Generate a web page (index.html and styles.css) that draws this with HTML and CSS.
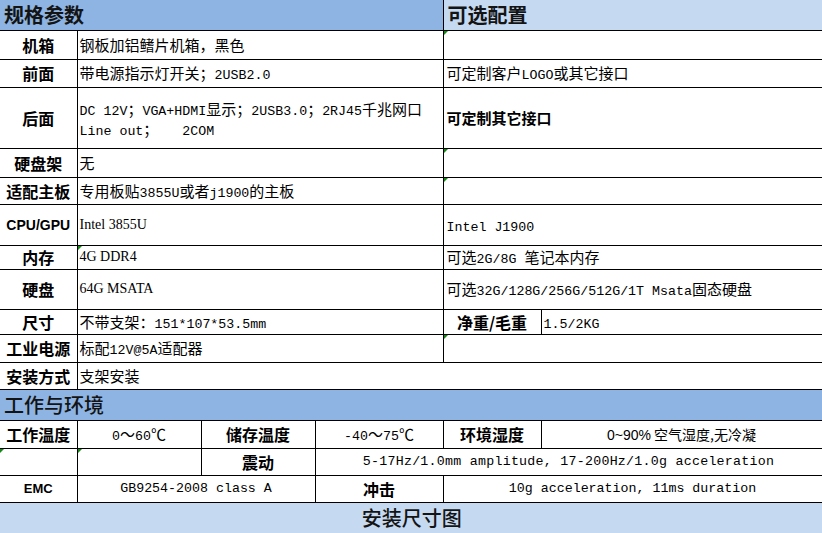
FILE: index.html
```html
<!DOCTYPE html>
<html lang="zh-CN">
<head>
<meta charset="utf-8">
<title>规格参数</title>
<link rel="stylesheet" href="styles.css">
</head>
<body>
<table class="spec">
  <colgroup>
    <col class="c1"><col class="c2"><col class="c3"><col class="c4"><col class="c5"><col class="c6">
  </colgroup>
  <tbody>
    <tr class="r30 top">
      <th colspan="4" class="sec dark bold">规格参数</th>
      <th colspan="2" class="sec light bold">可选配置</th>
    </tr>
    <tr class="r29">
      <th class="lbl">机箱</th>
      <td colspan="3" class="val">钢板加铝鳍片机箱，黑色</td>
      <td colspan="2" class="val opt mark"></td>
    </tr>
    <tr class="r28">
      <th class="lbl">前面</th>
      <td colspan="3" class="val">带电源指示灯开关；<span class="m">2USB2.0</span></td>
      <td colspan="2" class="val opt">可定制客户<span class="m">LOGO</span>或其它接口</td>
    </tr>
    <tr class="r61">
      <th class="lbl">后面</th>
      <td colspan="3" class="val two"><span class="m">DC 12V</span>；<span class="m">VGA+HDMI</span>显示；<span class="m">2USB3.0</span>；<span class="m">2RJ45</span>千兆网口<br><span class="m">Line out</span>；<span class="m pre">   2COM</span></td>
      <td colspan="2" class="val opt strong">可定制其它接口</td>
    </tr>
    <tr class="r29">
      <th class="lbl">硬盘架</th>
      <td colspan="3" class="val">无</td>
      <td colspan="2" class="val opt mark"></td>
    </tr>
    <tr class="r27">
      <th class="lbl">适配主板</th>
      <td colspan="3" class="val">专用板贴<span class="m">3855U</span>或者<span class="m">j1900</span>的主板</td>
      <td colspan="2" class="val opt mark"></td>
    </tr>
    <tr class="r41">
      <th class="lbl latin">CPU/GPU</th>
      <td colspan="3" class="val serif">Intel 3855U</td>
      <td colspan="2" class="val opt"><span class="m">Intel J1900</span></td>
    </tr>
    <tr class="r24">
      <th class="lbl">内存</th>
      <td colspan="3" class="val serif mark">4G DDR4</td>
      <td colspan="2" class="val opt">可选<span class="m">2G/8G </span>笔记本内存</td>
    </tr>
    <tr class="r40">
      <th class="lbl">硬盘</th>
      <td colspan="3" class="val serif">64G MSATA</td>
      <td colspan="2" class="val opt">可选<span class="m">32G/128G/256G/512G/1T Msata</span>固态硬盘</td>
    </tr>
    <tr class="r25">
      <th class="lbl">尺寸</th>
      <td colspan="3" class="val">不带支架：<span class="m">151*107*53.5mm</span></td>
      <th class="lbl">净重/毛重</th>
      <td class="val"><span class="m">1.5/2KG</span></td>
    </tr>
    <tr class="r28">
      <th class="lbl">工业电源</th>
      <td colspan="3" class="val">标配<span class="m">12V@5A</span>适配器</td>
      <td colspan="2" class="val opt mark"></td>
    </tr>
    <tr class="r27">
      <th class="lbl">安装方式</th>
      <td colspan="5" class="val">支架安装</td>
    </tr>
    <tr class="r31">
      <th colspan="6" class="sec dark medium">工作与环境</th>
    </tr>
    <tr class="r28">
      <th class="lbl">工作温度</th>
      <td class="ctr"><span class="m">0</span>～<span class="m">60</span>℃</td>
      <th class="lbl">储存温度</th>
      <td class="ctr"><span class="m">-40</span>～<span class="m">75</span>℃</td>
      <th class="lbl">环境湿度</th>
      <td class="ctr humid"><span class="sans">0~90%</span> 空气湿度,无冷凝</td>
    </tr>
    <tr class="r27">
      <td class="mark"></td>
      <td class="mark"></td>
      <th class="lbl">震动</th>
      <td colspan="3" class="ctr m wide">5-17Hz/1.0mm amplitude, 17-200Hz/1.0g acceleration</td>
    </tr>
    <tr class="r27">
      <th class="lbl latin small">EMC</th>
      <td colspan="2" class="ctr m">GB9254-2008 class A</td>
      <th class="lbl">冲击</th>
      <td colspan="2" class="ctr m">10g acceleration, 11ms duration</td>
    </tr>
    <tr class="r31">
      <th colspan="6" class="sec light medium center">安装尺寸图</th>
    </tr>
  </tbody>
</table>
</body>
</html>
```

FILE: styles.css
```css
html, body {
  margin: 0;
  padding: 0;
  background: #ffffff;
  overflow: hidden;
}

body {
  width: 822px;
  height: 533px;
  font-family: "Noto Sans CJK SC", sans-serif;
  color: #000000;
}

.spec {
  border-collapse: collapse;
  table-layout: fixed;
  width: 822px;
}

.c1 { width: 77px; }
.c2 { width: 124px; }
.c3 { width: 114px; }
.c4 { width: 128px; }
.c5 { width: 98px; }
.c6 { width: 281px; }

.spec th,
.spec td {
  border: 1px solid #000000;
  padding: 0 2px;
  font-size: 15px;
  line-height: 18px;
  font-weight: 400;
  white-space: nowrap;
  overflow: hidden;
  vertical-align: middle;
  text-align: left;
}

.spec tr > :first-child {
  border-left: none;
}

.spec .top th {
  border-top: none;
}

.r24 { height: 24px; }
.r25 { height: 25px; }
.r27 { height: 27px; }
.r28 { height: 28px; }
.r29 { height: 29px; }
.r30 { height: 30px; }
.r31 { height: 31px; }
.r40 { height: 40px; }
.r41 { height: 41px; }
.r61 { height: 61px; }

.spec .sec {
  font-size: 20px;
  line-height: 24px;
  color: #141414;
  padding-left: 4px;
}

.spec .bold { font-weight: 700; }
.spec .medium { font-weight: 500; }

.dark { background: #8db4e2; }
.light { background: #c5d9f1; }

.spec .center { text-align: center; }

.spec .lbl {
  font-size: 16px;
  font-weight: 700;
  text-align: center;
  padding: 0;
}

.spec .latin {
  font-family: "Liberation Sans", sans-serif;
  font-size: 14px;
}

.spec .small {
  font-size: 13px;
}

.spec .opt {
  padding-left: 3px;
}

.spec .strong {
  font-weight: 700;
}

.spec .serif {
  font-family: "Liberation Serif", serif;
  font-size: 14px;
}

.m {
  font-family: "Liberation Mono", "Noto Sans CJK SC", monospace;
  font-size: 13.3px;
}

span.m {
  line-height: 12px;
}

.spec td.m {
  font-size: 13.3px;
}

.spec .two {
  line-height: 20px;
  padding-top: 2px;
}

.pre {
  white-space: pre;
}

.spec .ctr {
  text-align: center;
}

.wide {
  letter-spacing: 0.25px;
}

.spec .humid {
  font-size: 14px;
}

.sans {
  font-family: "Liberation Sans", sans-serif;
  font-size: 14px;
}

.mark {
  position: relative;
}

.mark::before {
  content: "";
  position: absolute;
  left: 0;
  top: 0;
  border-top: 4px solid #138a13;
  border-right: 4px solid transparent;
}
```
